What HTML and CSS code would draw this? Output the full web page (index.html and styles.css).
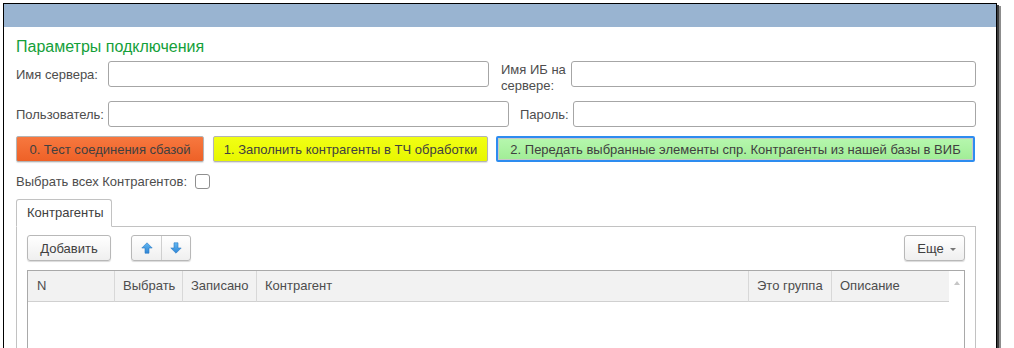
FILE: index.html
```html
<!DOCTYPE html>
<html lang="ru">
<head>
<meta charset="utf-8">
<title>Параметры подключения</title>
<link rel="stylesheet" href="styles.css">
</head>
<body>
<div class="window">
  <div class="titlebar"></div>
  <div class="content">
    <div class="heading">Параметры подключения</div>

    <div class="row row1">
      <label class="lbl lbl-srv">Имя сервера:</label>
      <div class="inp inp-srv"></div>
      <label class="lbl lbl-ib">Имя ИБ на<br>сервере:</label>
      <div class="inp inp-grow"></div>
    </div>

    <div class="row row2">
      <label class="lbl lbl-srv">Пользователь:</label>
      <div class="inp inp-user"></div>
      <label class="lbl lbl-pass">Пароль:</label>
      <div class="inp inp-grow"></div>
    </div>

    <div class="btnrow">
      <div class="cbtn cbtn-red">0. Тест соединения сбазой</div>
      <div class="cbtn cbtn-yellow">1. Заполнить контрагенты в ТЧ обработки</div>
      <div class="cbtn cbtn-green">2. Передать выбранные элементы спр. Контрагенты из нашей базы в ВИБ</div>
    </div>

    <div class="checkrow">
      <span class="lbl">Выбрать всех Контрагентов:</span>
      <span class="checkbox"></span>
    </div>

    <div class="tabs">
      <div class="tab">Контрагенты</div>
    </div>
    <div class="panel">
      <div class="toolbar">
        <div class="btn btn-add">Добавить</div>
        <div class="btngroup">
          <div class="btn-ico">
            <svg width="12" height="12" viewBox="0 0 12 12">
              <defs>
                <linearGradient id="gu" x1="0" y1="0" x2="0" y2="1">
                  <stop offset="0" stop-color="#63b8f2"/>
                  <stop offset="1" stop-color="#2f86d6"/>
                </linearGradient>
              </defs>
              <path d="M6 0.8 L11.2 6 H8 V11.2 H4 V6 H0.8 Z" fill="url(#gu)" stroke="#2a78c4" stroke-width="0.6" stroke-linejoin="round"/>
            </svg>
          </div>
          <div class="btn-ico">
            <svg width="12" height="12" viewBox="0 0 12 12">
              <defs>
                <linearGradient id="gd" x1="0" y1="0" x2="0" y2="1">
                  <stop offset="0" stop-color="#63b8f2"/>
                  <stop offset="1" stop-color="#2f86d6"/>
                </linearGradient>
              </defs>
              <path d="M6 11.2 L11.2 6 H8 V0.8 H4 V6 H0.8 Z" fill="url(#gd)" stroke="#2a78c4" stroke-width="0.6" stroke-linejoin="round"/>
            </svg>
          </div>
        </div>
        <div class="spacer"></div>
        <div class="btn btn-more">Еще <span class="caret"></span></div>
      </div>

      <div class="table">
        <div class="thead">
          <div class="th">N</div>
          <div class="th">Выбрать</div>
          <div class="th">Записано</div>
          <div class="th">Контрагент</div>
          <div class="th">Это группа</div>
          <div class="th th-last">Описание</div>
          <div class="th-scroll"><span class="scroll-up"></span></div>
        </div>
        <div class="tbody"></div>
      </div>
    </div>
  </div>
</div>
</body>
</html>
```

FILE: styles.css
```css
* { box-sizing: border-box; }

html, body {
  margin: 0;
  padding: 0;
  background: #ffffff;
  overflow: hidden;
  height: 348px;
}

body {
  font-family: "Liberation Sans", Arial, sans-serif;
  font-size: 13px;
  color: #4d4d4d;
}

.window {
  margin: 3px 0 0 3px;
  width: 994px;
  height: 345px;
  overflow: hidden;
  border: 1px solid #000;
  border-bottom: none;
  background: #fff;
  box-shadow: 2px 2px 0 #3c3c3c, 4px 3px 0 #8c8c8c;
}

.titlebar {
  height: 23px;
  background: #99b4d1;
}

.content {
  padding: 11px 20px 0 12px;
}

.heading {
  font-size: 16px;
  line-height: 18px;
  color: #14a03a;
  height: 18px;
}

.row {
  display: flex;
  align-items: center;
  height: 26px;
}

.row1 { margin-top: 5px; }
.row2 { margin-top: 14px; }

.lbl {
  white-space: nowrap;
  color: #4d4d4d;
}

.lbl-srv { width: 92px; }

.lbl-ib {
  width: 70px;
  margin-left: 12px;
  align-self: flex-start;
  line-height: 16px;
  padding-top: 1px;
}

.lbl-pass {
  width: 53px;
  margin-left: 11px;
}

.inp {
  height: 26px;
  border: 1px solid #a6a6a6;
  border-radius: 3px;
  background: #fff;
}

.inp-srv { width: 381px; }
.inp-user { width: 401px; }
.inp-grow { flex: 1; }

.btnrow {
  display: flex;
  margin-top: 9px;
  height: 26px;
}

.cbtn {
  height: 26px;
  border: 1px solid #b4b4b4;
  border-radius: 2px;
  display: flex;
  align-items: center;
  justify-content: center;
  color: #404040;
  white-space: nowrap;
  box-shadow: 0 1px 1px rgba(0,0,0,0.12);
}

.cbtn-red {
  width: 188px;
  background: linear-gradient(#f7783f, #ee6127);
}

.cbtn-yellow {
  width: 275px;
  margin-left: 9px;
  background: linear-gradient(#f2ff14, #e8f700);
}

.cbtn-green {
  width: 479px;
  margin-left: 8px;
  border: 2px solid #2d8cf0;
  background: linear-gradient(#b6f7ae, #a1ed96);
  box-shadow: inset 0 0 0 1px #c8c8c8;
}

.checkrow {
  display: flex;
  align-items: center;
  margin-top: 11px;
  height: 16px;
}

.checkbox {
  display: inline-block;
  width: 15px;
  height: 15px;
  border: 1px solid #8f8f8f;
  border-radius: 3px;
  margin-left: 8px;
  background: #fff;
}

.tabs {
  display: flex;
  margin-top: 10px;
  position: relative;
  z-index: 1;
}

.tab {
  height: 28px;
  width: 96px;
  border: 1px solid #c2c2c2;
  border-bottom: 1px solid #fff;
  border-radius: 3px 3px 0 0;
  background: #fff;
  padding-left: 10px;
  line-height: 26px;
  color: #404040;
  margin-bottom: -1px;
}

.panel {
  width: 960px;
  height: 124px;
  border: 1px solid #c2c2c2;
  border-bottom: none;
  padding: 8px 10px 0 10px;
}

.toolbar {
  display: flex;
  height: 26px;
}

.spacer { flex: 1; }

.btn {
  height: 26px;
  border: 1px solid #b8b8b8;
  border-radius: 3px;
  background: linear-gradient(#ffffff, #efefef);
  box-shadow: 0 1px 1px rgba(0,0,0,0.15);
  display: flex;
  align-items: center;
  justify-content: center;
  color: #404040;
  white-space: nowrap;
}

.btn-add { width: 84px; }

.btn-more {
  width: 61px;
  padding-left: 4px;
}

.caret {
  display: inline-block;
  width: 0;
  height: 0;
  border-left: 3px solid transparent;
  border-right: 3px solid transparent;
  border-top: 3px solid #777;
  margin-left: 6px;
  margin-top: 2px;
}

.btngroup {
  display: flex;
  margin-left: 20px;
  height: 26px;
  border: 1px solid #b8b8b8;
  border-radius: 3px;
  background: linear-gradient(#ffffff, #efefef);
  box-shadow: 0 1px 1px rgba(0,0,0,0.15);
}

.btn-ico {
  width: 29px;
  display: flex;
  align-items: center;
  justify-content: center;
}

.btn-ico + .btn-ico {
  border-left: 1px solid #cfcfcf;
}

.table {
  margin-top: 9px;
  width: 938px;
  height: 80px;
  border: 1px solid #a9a9a9;
  border-bottom: none;
}

.thead {
  display: grid;
  grid-template-columns: 87px 68px 74px 492px 83px 117px 15px;
  height: 31px;
}

.th {
  background: #f2f2f2;
  border-right: 1px solid #d8d8d8;
  border-bottom: 1px solid #d0d0d0;
  padding-left: 8px;
  line-height: 30px;
  color: #4d4d4d;
  white-space: nowrap;
  overflow: hidden;
}

.th:first-child { padding-left: 9px; }

.th-last { border-right: none; }

.th-scroll {
  background: #fff;
  position: relative;
}

.scroll-up {
  position: absolute;
  left: 5px;
  top: 10px;
  width: 0;
  height: 0;
  border-left: 3px solid transparent;
  border-right: 3px solid transparent;
  border-bottom: 4px solid #c6c6c6;
}
```
